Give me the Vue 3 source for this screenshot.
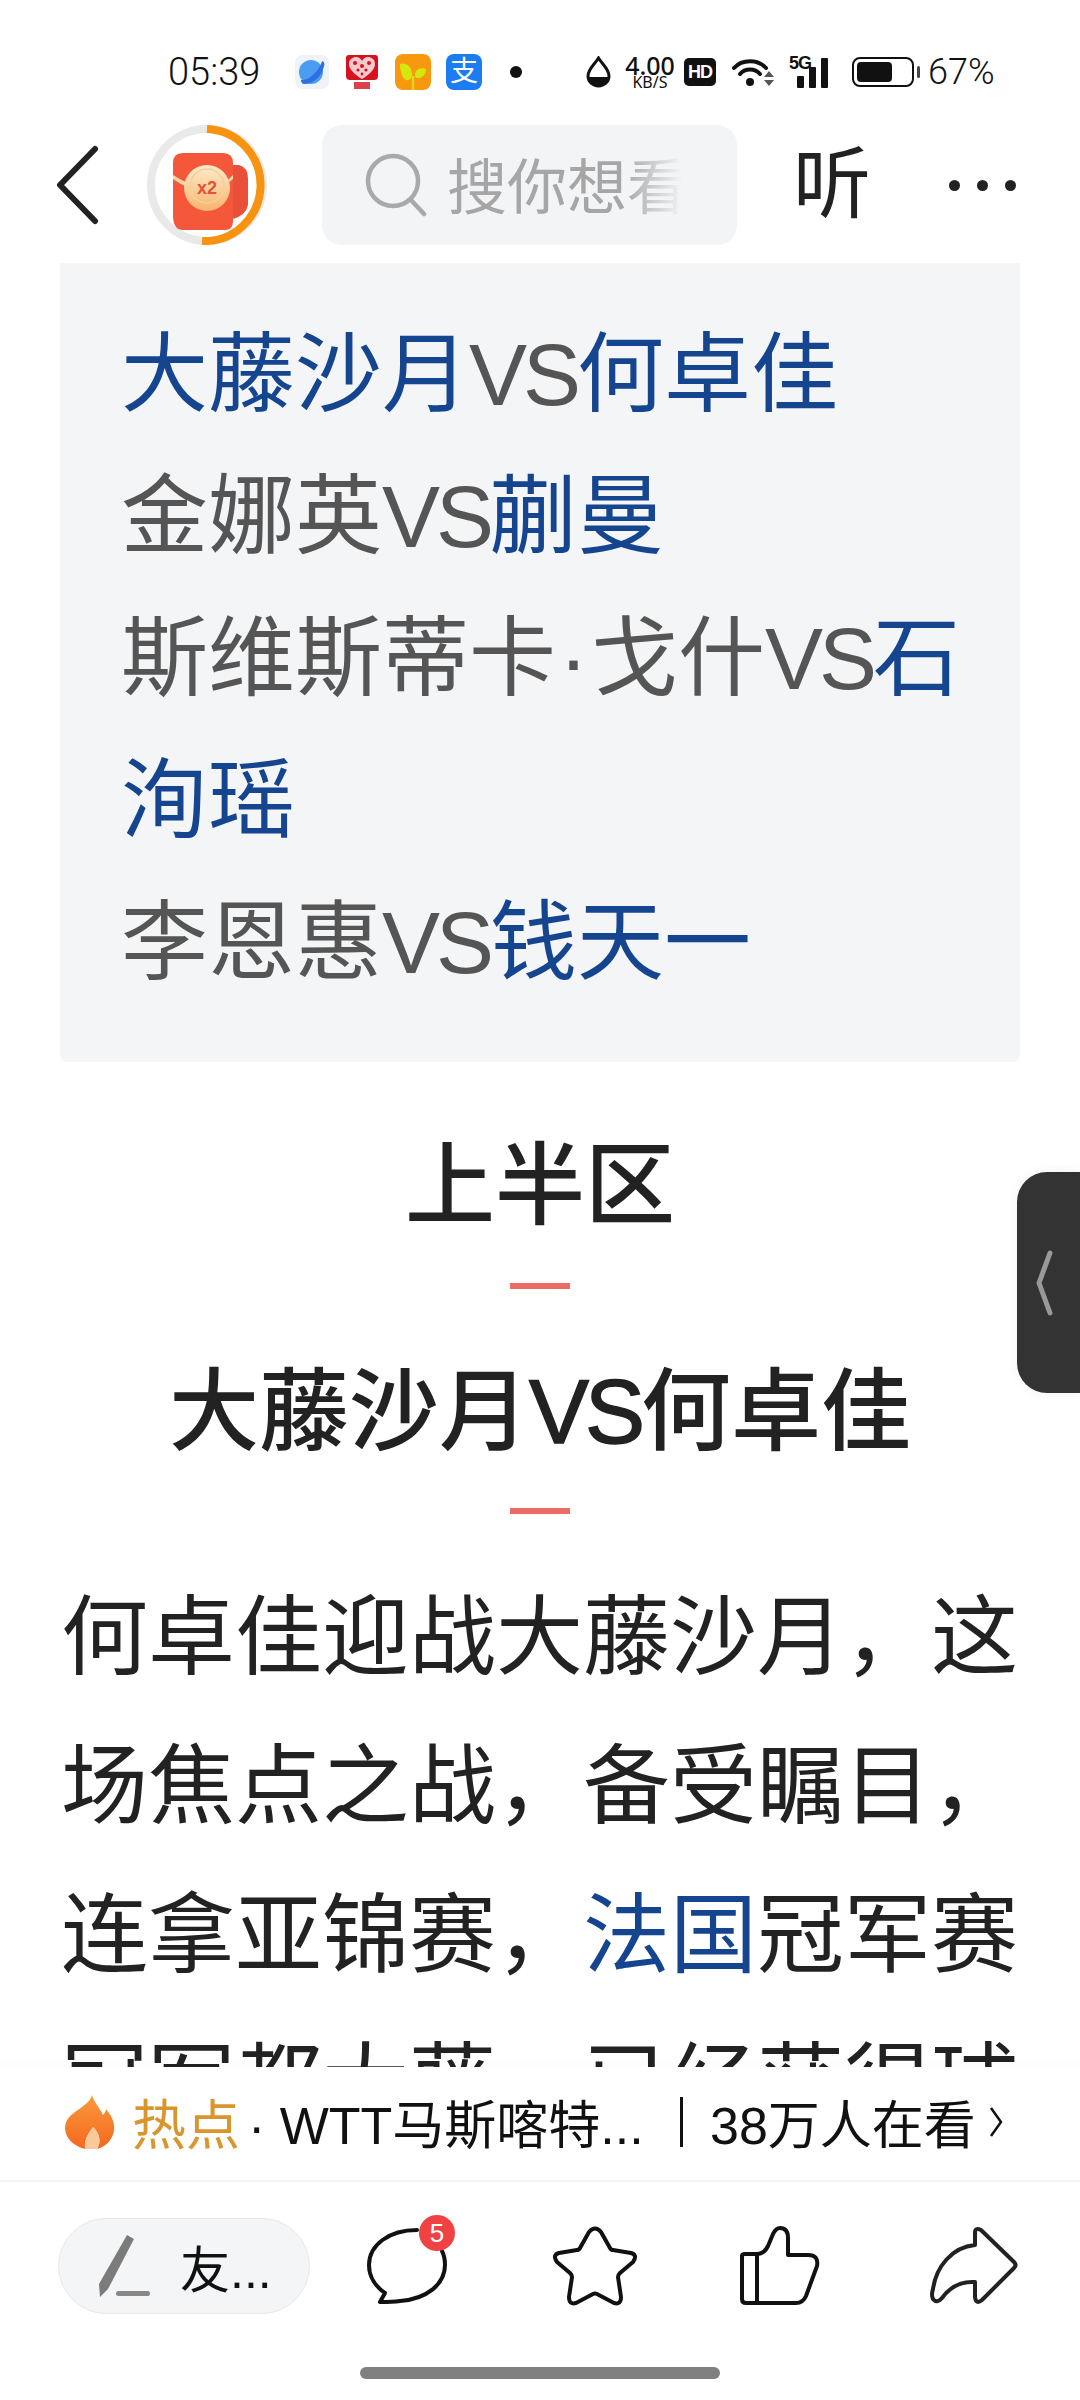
<script setup>
const matches = [
  [{ t: '大藤沙月', link: true }, { t: 'VS', vs: true }, { t: '何卓佳', link: true }],
  [{ t: '金娜英' }, { t: 'VS', vs: true }, { t: '蒯曼', link: true }],
  [{ t: '斯维斯蒂卡' }, { t: '·', mid: true }, { t: '戈什' }, { t: 'VS', vs: true }, { t: '石洵瑶', link: true }],
  [{ t: '李恩惠' }, { t: 'VS', vs: true }, { t: '钱天一', link: true }]
]
</script>

<template>
  <div class="page">
    <div class="status">
      <span class="time">05:39</span>
      <div class="apps">
        <svg class="app" viewBox="0 0 34 34" width="34" height="34">
          <rect width="34" height="34" rx="7" fill="#eff3f7" />
          <circle cx="16" cy="17" r="12" fill="#4a9df2" />
          <path d="M6 25 C14 26 25 15 27 6 C30 7 30 10 28 14 C26 22 18 29 9 29 C7 29 6 27 6 25 Z" fill="#2f6fe0" />
        </svg>
        <svg class="app" viewBox="0 0 36 36" width="36" height="36">
          <path d="M2 4 Q2 1 5 1 H31 Q34 1 34 4 V22 Q34 26 30 26 H6 Q2 26 2 22 Z" fill="#d5121e" />
          <path d="M18 25 C10 20 5 15 5 10 C5 5 9 3 12 3 C15 3 17 5 18 7 C19 5 21 3 24 3 C27 3 31 5 31 10 C31 15 26 20 18 25 Z" fill="#f7c9cc" />
          <g fill="#d5121e"><circle cx="11" cy="9" r="2" /><circle cx="18" cy="12" r="2" /><circle cx="25" cy="9" r="2" /><circle cx="14" cy="16" r="1.6" /><circle cx="22" cy="16" r="1.6" /><circle cx="18" cy="20" r="1.4" /></g>
          <rect x="10" y="28" width="16" height="7" fill="#d5121e" opacity="0.8" />
        </svg>
        <svg class="app" viewBox="0 0 36 36" width="36" height="36">
          <rect width="36" height="36" rx="8" fill="#f7980f" />
          <path d="M18 36 V22" stroke="#e8d21a" stroke-width="2.5" />
          <path d="M5 10 C10 8 17 12 17 20 C17 25 14 27 11 26 C7 24 5 17 5 10 Z" fill="#d2e80e" />
          <path d="M20 20 C21 15 26 13 31 15 C31 20 27 25 22 24 C20 24 20 22 20 20 Z" fill="#d2e80e" />
        </svg>
        <div class="alipay">支</div>
      </div>
      <i class="dot"></i>
      <svg class="drop" viewBox="0 0 25 32" width="25" height="32">
        <path d="M12.5 2 C9 8 2 13 2 20 C2 26 7 30 12.5 30 C18 30 23 26 23 20 C23 13 16 8 12.5 2 Z" fill="none" stroke="#111" stroke-width="3" />
        <path d="M2.5 21 H22.5 C22 27 17 30 12.5 30 C8 30 3 27 2.5 21 Z" fill="#111" />
      </svg>
      <div class="speed"><b>4.00</b><span>KB/S</span></div>
      <div class="hd">HD</div>
      <svg class="wifi" viewBox="0 0 44 32" width="44" height="32">
        <g fill="none" stroke="#111" stroke-width="4" stroke-linecap="round">
          <path d="M2 12 C10 3 26 3 34 12" />
          <path d="M8 18 C13 12 23 12 28 18" />
        </g>
        <circle cx="18" cy="26" r="4" fill="#111" />
        <path d="M32 21 L37 15 L42 21 Z M32 24 H42 L37 30 Z" fill="#555" />
      </svg>
      <div class="signal">
        <span class="five-g">5G</span>
        <i class="bar b1"></i><i class="bar b2"></i><i class="bar b3"></i>
      </div>
      <div class="battery"><i></i></div>
      <span class="percent">67%</span>
    </div>

    <div class="header">
      <svg class="back" viewBox="0 0 44 80" width="44" height="80">
        <path d="M40 4 L5 40 L40 76" fill="none" stroke="#222" stroke-width="6" stroke-linecap="round" stroke-linejoin="round" />
      </svg>
      <div class="reward">
        <svg viewBox="0 0 120 120" width="120" height="120">
          <defs>
            <linearGradient id="coin" x1="0" y1="0" x2="0" y2="1">
              <stop offset="0" stop-color="#fdeccb" />
              <stop offset="1" stop-color="#f9b46d" />
            </linearGradient>
          </defs>
          <circle cx="60" cy="60" r="56" fill="none" stroke="#e9e9e9" stroke-width="8" />
          <path d="M60 4 A56 56 0 1 1 55 116" fill="none" stroke="#f7930e" stroke-width="8" />
          <path d="M85 40 H92 Q101 42 101 54 V80 Q99 90 86 94 Z" fill="#e8503a" />
          <path d="M26 38 Q26 28 36 28 H76 Q86 28 86 38 V96 Q86 105 78 105 H36 Q26 105 26 90 Z" fill="#f4573a" />
          <path d="M26 50 Q44 62 60 62 Q76 62 86 50 V54 Q74 66 60 66 Q42 66 26 54 Z" fill="#f9d7a8" />
          <circle cx="60" cy="63" r="23" fill="url(#coin)" />
          <circle cx="60" cy="61" r="17" fill="none" stroke="#f7cf97" stroke-width="1.5" />
          <text x="60" y="69" text-anchor="middle" class="x2">x2</text>
        </svg>
      </div>
      <div class="search">
        <svg viewBox="0 0 62 64" width="62" height="64">
          <circle cx="28" cy="28" r="25" fill="none" stroke="#a9a9a9" stroke-width="4.5" />
          <path d="M46 47 L59 61" stroke="#a9a9a9" stroke-width="4.5" stroke-linecap="round" />
        </svg>
        <div class="placeholder">搜你想看<i class="fade"></i></div>
      </div>
      <span class="listen">听</span>
      <div class="more"><i></i><i></i><i></i></div>
    </div>

    <div class="article">
      <div class="match-box">
        <p v-for="(line, i) in matches" :key="i">
          <span v-for="(part, j) in line" :key="j" :class="{ link: part.link, vs: part.vs, mid: part.mid }">{{ part.t }}</span>
        </p>
      </div>
      <h2 class="section first">上半区</h2>
      <div class="rule rule-a"></div>
      <h2 class="section second">大藤沙月<span class="vs">VS</span>何卓佳</h2>
      <div class="rule rule-b"></div>
      <p class="body-text">何卓佳迎战大藤沙月，这场焦点之战，备受瞩目，连拿亚锦赛，<span class="link">法国</span>冠军赛冠军都大藤，已经获得球</p>
    </div>

    <div class="side-tab">
      <svg viewBox="0 0 20 68" width="20" height="68">
        <path d="M15 4 L4 34 L15 64" fill="none" stroke="#999" stroke-width="5" stroke-linecap="round" stroke-linejoin="round" />
      </svg>
    </div>

    <div class="bottom">
      <div class="hot">
        <svg class="flame" viewBox="0 0 50 54" width="50" height="54">
          <defs>
            <linearGradient id="fl" x1="0" y1="0" x2="0" y2="1">
              <stop offset="0" stop-color="#fb9a3c" />
              <stop offset="1" stop-color="#f4671f" />
            </linearGradient>
          </defs>
          <path d="M27 0 C30 9 35 13 38 20 C40 18 41 16 41 14 C47 21 50 28 49 36 C47 46 40 52 32 54 C37 46 34 38 28 32 C25 37 19 42 20 54 C9 51 1 44 0 34 C0 22 9 18 17 12 C21 9 26 5 27 0 Z" fill="url(#fl)" />
          <path d="M28 32 C34 38 37 46 32 54 H20 C19 42 25 37 28 32 Z" fill="#fbc99a" />
        </svg>
        <span class="hot-label">热点</span>
        <span class="hot-title">· WTT马斯喀特...</span>
        <span class="hot-sep"></span>
        <span class="hot-count">38万人在看</span>
        <svg class="hot-arrow" viewBox="0 0 16 32" width="16" height="32">
          <path d="M3 2 L13 16 L3 30" fill="none" stroke="#111" stroke-width="2.5" />
        </svg>
      </div>
      <div class="actions">
        <div class="pill">
          <svg viewBox="0 0 52 64" width="52" height="64">
            <path d="M28 1 L35 5 L9 55 L1 63 L0 50 Z" fill="#7b7b7b" />
            <rect x="17" y="57" width="34" height="5" rx="2.5" fill="#888" />
          </svg>
          <span>友...</span>
        </div>
        <div class="icon comment">
          <svg viewBox="0 0 80 76" width="80" height="76">
            <path d="M50 2 C22 2 2 17 2 37 C2 49 9 59 18 65 L13 74 C20 74 26 74 33 73 C60 71 78 56 78 37 C78 32 77 27 75 23" fill="none" stroke="#111" stroke-width="4" stroke-linecap="round" stroke-linejoin="round" />
          </svg>
          <span class="badge">5</span>
        </div>
        <svg class="icon star" viewBox="-2 -2 88 84" width="88" height="84">
          <path d="M36 6 Q42 -1 48 6 L57 22 Q58 24 60 24 L78 27 Q85 29 80 36 L67 47 Q65 49 65 51 L68 71 Q68 79 61 77 L44 68 Q42 67 40 68 L23 77 Q16 79 16 71 L19 51 Q19 49 17 47 L4 36 Q-1 29 6 27 L24 24 Q26 24 27 22 Z" fill="none" stroke="#111" stroke-width="4" stroke-linejoin="round" />
        </svg>
        <svg class="icon thumb" viewBox="0 0 80 80" width="80" height="80">
          <path d="M2 30 Q2 28 5 28 H17 Q24 28 28 20 L33 8 Q36 2 40 2 Q48 2 48 12 V29 H68 Q79 29 77 40 L66 70 Q63 77 56 77 H6 Q2 77 2 73 Z M17 28 V77" fill="none" stroke="#111" stroke-width="4" stroke-linejoin="round" />
        </svg>
        <svg class="icon share" viewBox="0 0 88 78" width="88" height="78">
          <path d="M45 6 Q45 0 51 3 L84 35 Q87 38 84 41 L52 73 Q46 78 45 70 V55 C30 54 20 60 12 71 Q7 77 3 72 Q1 68 3 62 C6 40 22 20 45 18 Z" fill="none" stroke="#222" stroke-width="4" stroke-linejoin="round" />
        </svg>
      </div>
      <div class="home-wrap"><div class="home-bar"></div></div>
    </div>
  </div>
</template>

<style scoped>
.page {
  position: relative;
  width: 1080px;
  height: 2400px;
  display: flex;
  flex-direction: column;
  overflow: hidden;
  background: #fff;
  font-family: "Liberation Sans", "Noto Sans CJK SC", sans-serif;
  color: #222;
}

.status {
  flex: none;
  height: 100px;
  padding: 44px 0 0 168px;
  box-sizing: border-box;
  display: flex;
  align-items: center;
  color: #111;
}

.time {
  font-family: Roboto, sans-serif;
  font-weight: 300;
  font-size: 38px;
  width: 127px;
}

.apps {
  display: flex;
  align-items: center;
  gap: 15px;
}

.alipay {
  width: 36px;
  height: 36px;
  border-radius: 8px;
  background: #1c7cf2;
  color: #fff;
  font-size: 28px;
  line-height: 36px;
  text-align: center;
}

.dot {
  width: 12px;
  height: 12px;
  margin-left: 28px;
  border-radius: 50%;
  background: #111;
}

.drop {
  margin-left: 64px;
}

.speed {
  margin-left: 13px;
  width: 52px;
  display: flex;
  flex-direction: column;
  align-items: center;
  font-family: "Noto Sans", sans-serif;
}

.speed b {
  font-size: 25px;
  line-height: 20px;
  font-weight: 500;
}

.speed span {
  font-size: 16px;
  line-height: 15px;
}

.hd {
  margin-left: 8px;
  width: 32px;
  height: 28px;
  border-radius: 5px;
  background: #111;
  color: #fff;
  font-size: 18px;
  font-weight: 700;
  line-height: 28px;
  text-align: center;
  letter-spacing: -1px;
}

.wifi {
  margin-left: 16px;
}

.signal {
  position: relative;
  margin-left: 18px;
  width: 44px;
  height: 32px;
  display: flex;
  align-items: flex-end;
  gap: 5px;
  padding-left: 3px;
  box-sizing: border-box;
}

.five-g {
  position: absolute;
  left: -5px;
  top: -3px;
  font-size: 18px;
  font-weight: 700;
  letter-spacing: -1px;
}

.bar {
  width: 7px;
  background: #111;
  border-radius: 1px;
}

.b1 { height: 12px; }
.b2 { height: 21px; }
.b3 { height: 30px; }

.battery {
  position: relative;
  margin-left: 14px;
  width: 62px;
  height: 30px;
  border: 2.5px solid #111;
  border-radius: 8px;
  box-sizing: border-box;
  padding: 3px;
}

.battery i {
  display: block;
  width: 35px;
  height: 100%;
  border-radius: 4px;
  background: #111;
}

.battery::after {
  content: "";
  position: absolute;
  right: -8px;
  top: 7px;
  width: 3px;
  height: 12px;
  background: #444;
  border-radius: 2px;
}

.percent {
  margin-left: 14px;
  font-family: Roboto, sans-serif;
  font-weight: 300;
  font-size: 36px;
}

.header {
  flex: none;
  height: 120px;
  margin-top: 25px;
  display: flex;
  align-items: center;
}

.back {
  margin-left: 55px;
}

.reward {
  margin-left: 48px;
  height: 120px;
}

.x2 {
  font-size: 18px;
  font-weight: 700;
  fill: #e8503a;
}

.search {
  margin-left: 55px;
  width: 415px;
  height: 120px;
  border-radius: 20px;
  background: #f2f4f6;
  display: flex;
  align-items: center;
  padding-left: 43px;
  box-sizing: border-box;
}

.placeholder {
  position: relative;
  margin-left: 20px;
  margin-top: 8px;
  width: 236px;
  overflow: hidden;
  white-space: nowrap;
  font-size: 60px;
  line-height: 80px;
  color: #a6a6a6;
}

.fade {
  position: absolute;
  right: 0;
  top: 0;
  bottom: 0;
  width: 60px;
  background: linear-gradient(to right, rgba(242, 244, 246, 0), #f2f4f6);
}

.listen {
  margin-left: 56px;
  font-size: 78px;
  line-height: 90px;
  color: #222;
}

.more {
  margin-left: 78px;
  display: flex;
  gap: 17px;
}

.more i {
  width: 11px;
  height: 11px;
  border-radius: 50%;
  background: #222;
}

.article {
  flex: 1;
  min-height: 0;
  margin-top: 18px;
  overflow: hidden;
}

.match-box {
  margin: 0 60px;
  padding: 41px 40px 48px 61px;
  background: #f3f5f7;
  border-radius: 0 0 8px 8px;
  font-size: 87px;
  line-height: 142px;
  color: #555;
}

.match-box p {
  margin: 0;
}

.vs {
  letter-spacing: -4px;
}

.mid {
  padding: 0 3px;
}

.link {
  color: #15458f;
}

.section {
  margin: 0;
  text-align: center;
  font-size: 90px;
  line-height: 124px;
  font-weight: 500;
  color: #222;
}

.section .vs {
  font-weight: 400;
  -webkit-text-stroke: 1.5px #222;
}

.section.first {
  margin-top: 62px;
}

.section.second {
  margin-top: 61px;
}

.rule {
  width: 60px;
  height: 6px;
  margin: 0 auto;
  background: #ec6b64;
}

.rule-a {
  margin-top: 35px;
}

.rule-b {
  margin-top: 34px;
}

.body-text {
  margin: 49px 60px 0 61px;
  font-size: 87px;
  line-height: 149px;
  color: #222;
}

.side-tab {
  position: absolute;
  right: 0;
  top: 1172px;
  width: 63px;
  height: 221px;
  border-radius: 30px 0 0 30px;
  background: #333;
  box-shadow: 0 0 12px rgba(0, 0, 0, 0.06);
  display: flex;
  align-items: center;
  padding-left: 18px;
  box-sizing: border-box;
}

.bottom {
  flex: none;
  height: 333px;
  background: #fff;
  display: flex;
  flex-direction: column;
  box-shadow: 0 -8px 10px rgba(0, 0, 0, 0.012);
}

.hot {
  flex: none;
  height: 115px;
  padding: 0 0 4px 65px;
  box-sizing: border-box;
  display: flex;
  align-items: center;
  border-bottom: 2px solid #f5f5f5;
  font-size: 52px;
  white-space: nowrap;
  color: #111;
}

.hot-label {
  margin-left: 17px;
  font-size: 54px;
  color: #d9952e;
}

.hot-title {
  margin-left: 8px;
  width: 432px;
}

.hot-sep {
  width: 3px;
  height: 50px;
  background: #111;
}

.hot-count {
  margin-left: 27px;
}

.hot-arrow {
  margin-left: 12px;
}

.actions {
  flex: none;
  height: 131px;
  padding: 0 0 0 58px;
  margin-top: 18px;
  display: flex;
  align-items: center;
}

.pill {
  width: 252px;
  height: 96px;
  border: 1px solid #e6e8ea;
  border-radius: 48px;
  background: #f3f5f6;
  box-sizing: border-box;
  display: flex;
  align-items: center;
  padding-left: 40px;
  font-size: 50px;
  color: #111;
}

.pill span {
  margin-left: 29px;
}

.icon {
  flex: none;
  display: block;
}

.comment {
  position: relative;
  margin-left: 57px;
  height: 76px;
}

.badge {
  position: absolute;
  left: 52px;
  top: -13px;
  width: 36px;
  height: 36px;
  border-radius: 50%;
  background: #f04242;
  color: #fff;
  font-size: 26px;
  line-height: 36px;
  text-align: center;
  font-family: "Liberation Sans", sans-serif;
}

.star {
  margin-left: 104px;
}

.thumb {
  margin-left: 101px;
}

.share {
  margin-left: 110px;
}

.home-wrap {
  flex: 1;
  display: flex;
  justify-content: center;
  padding-top: 36px;
  box-sizing: border-box;
}

.home-bar {
  width: 360px;
  height: 12px;
  border-radius: 6px;
  background: #808080;
}
</style>
